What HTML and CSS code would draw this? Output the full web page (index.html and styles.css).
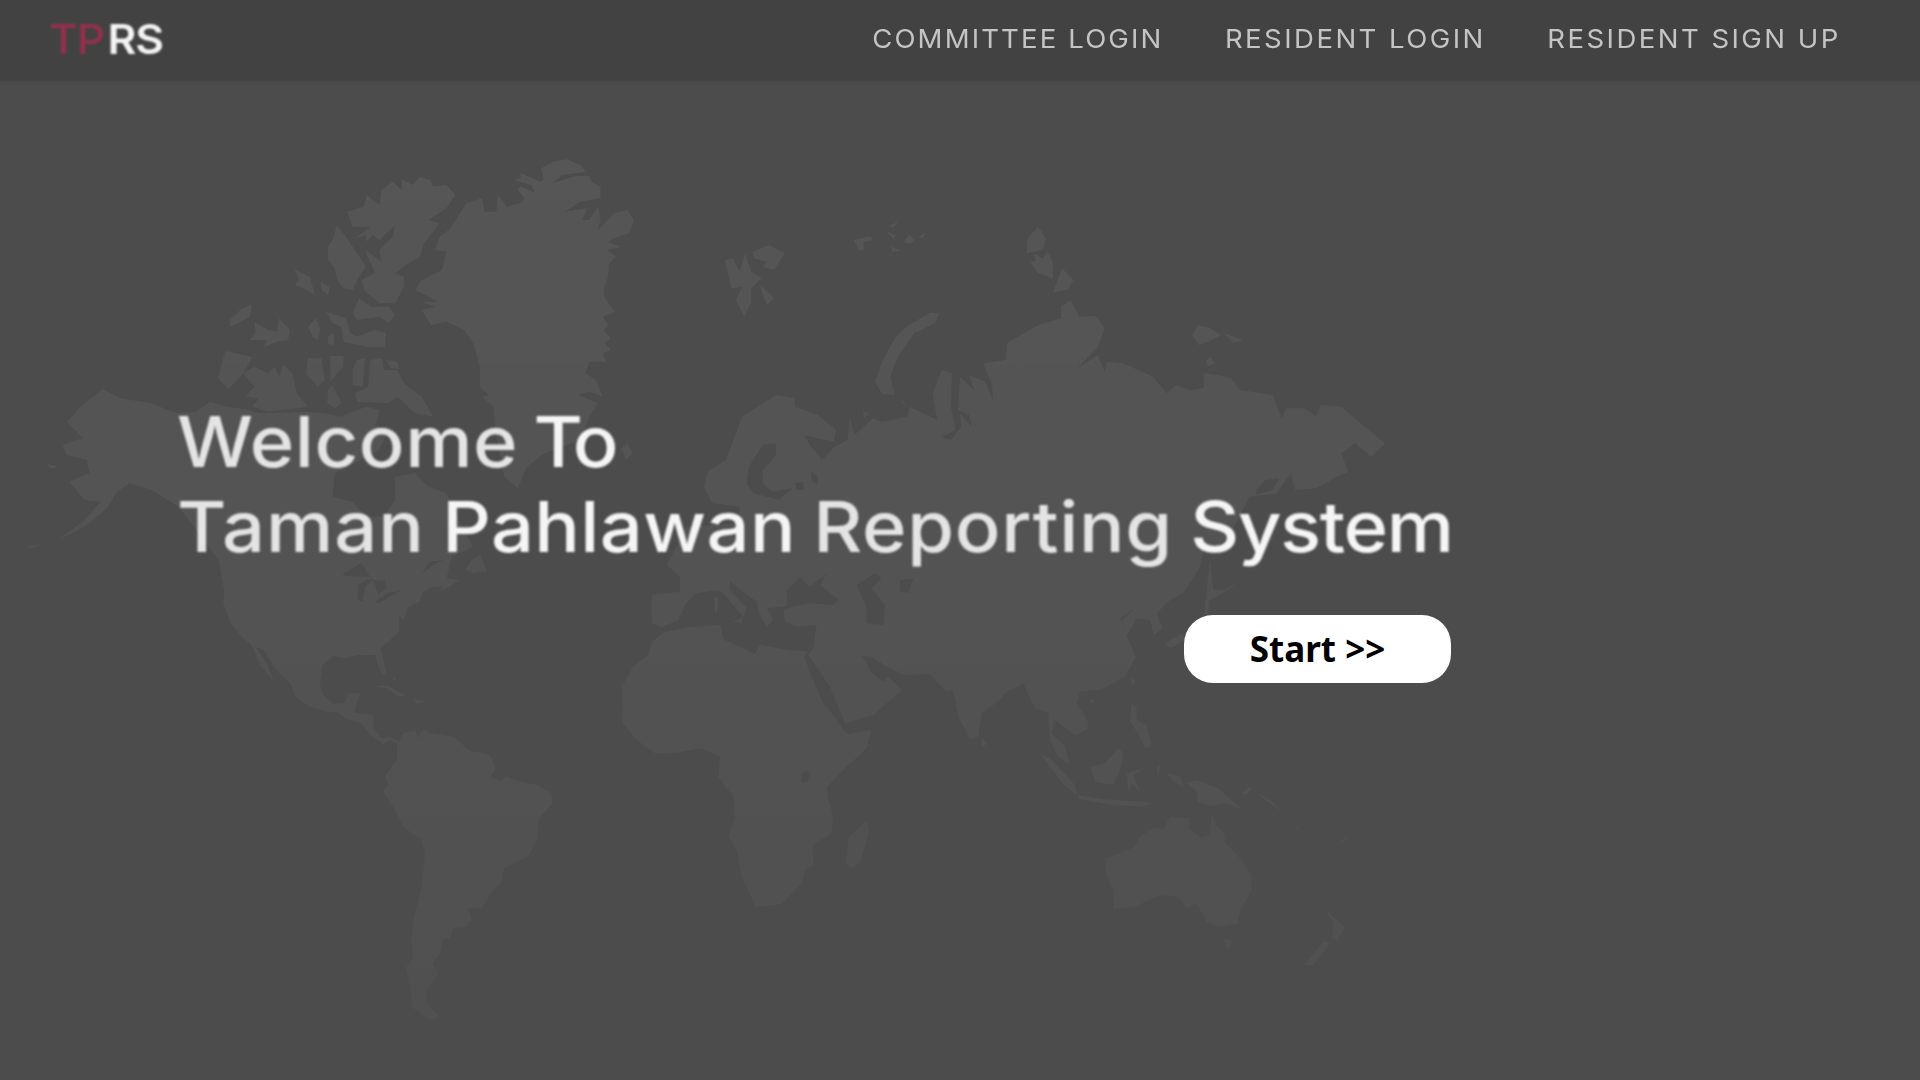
FILE: index.html
```html
<!DOCTYPE html>
<html lang="en">
<head>
<meta charset="utf-8">
<title>TPRS</title>
<link rel="stylesheet" href="styles.css">
</head>
<body>
<svg class="map" viewBox="0 0 1920 1080" aria-hidden="true">
  <defs>
    <linearGradient id="shade" x1="0" y1="0" x2="0" y2="1">
      <stop offset="0" stop-color="#575757"/>
      <stop offset=".45" stop-color="#545454"/>
      <stop offset="1" stop-color="#505050"/>
    </linearGradient>
    <mask id="land" maskUnits="userSpaceOnUse" x="0" y="0" width="1920" height="1080">
      <!-- Arctic, Greenland and the north of America -->
      <g transform="matrix(.4464 0 0 .3333 0 140)" fill="#fff">
        <path d="M1030 220L1045 190 1080 175 1085 215 1112 215 1115 165 1135 200 1165 190 1175 175 1160 150 1165 138 1198 158 1190 135 1150 120 1168 115 1165 98 1210 125 1218 118 1212 85 1240 65 1270 58 1300 75 1312 95 1260 105 1240 128 1290 108 1320 108 1325 125 1345 140 1345 175 1300 185 1265 215 1315 205 1305 240 1320 240 1340 200 1345 235 1340 270 1375 220 1405 210 1420 240 1410 280 1385 290 1360 305 1390 320 1360 330 1380 350 1365 370 1362 410 1352 450 1355 475 1378 515 1350 530 1362 555 1352 570 1368 595 1355 610 1368 630 1350 640 1358 665 1320 665 1312 700 1335 720 1350 770 1320 755 1295 765 1340 790 1320 830 1300 900 1220 940 1180 980 1160 1045 1130 1010 1110 880 1105 800 1080 770 1095 765 1075 740 1075 680 1060 610 1040 570 1000 545 965 555 945 510 975 500 945 485 980 485 930 450 945 420 990 390 1000 335 975 330 985 290 1010 265Z"/>
        <path d="M1020 165L1000 205 960 240 985 250 950 310 940 350 915 370 885 400 905 410 905 440 885 490 850 490 815 450 810 420 840 400 818 330 855 365 850 330 880 290 885 255 850 300 835 285 820 305 820 285 795 295 830 262 790 260 778 215 815 200 822 165 850 195 855 150 880 125 900 150 900 118 925 135 940 110 965 120 970 140 1000 135Z"/>
        <path d="M755 255L780 300 800 340 820 380 800 420 790 450 770 445 755 420 750 385 735 360 735 320 745 300Z"/>
        <path d="M660 388L695 412 705 465 680 445 660 435 670 420ZM718 425L738 440 735 465 720 450ZM565 492L560 530 515 562 515 540 540 508ZM570 545L600 570 620 575 625 535 650 570 645 600 620 605 590 622 600 600 560 600 572 575ZM690 560L708 535 718 570 712 600 700 590ZM730 515L775 535 785 580 800 590 840 570 865 580 862 622 820 620 770 605 765 560 745 550ZM735 590L748 580 748 615 735 612ZM790 520L805 475 830 500 870 500 885 525 870 548 850 530 800 540ZM505 632L565 652 545 700 512 748 488 715ZM545 700L570 680 600 700 615 680 625 710 635 675 655 700 665 760 690 800 600 815 565 800 580 775 550 770 570 740ZM690 655L720 655 728 720 712 740 685 700ZM740 648L770 648 768 680 740 725ZM735 750L745 735 765 790 750 805 733 790ZM800 660L818 655 812 740 790 735 790 690ZM830 660L855 655 860 690 890 690 905 730 945 770 970 830 930 820 890 770 870 790 800 785 795 760 825 740ZM865 660L890 665 895 688 875 685Z"/>
        <path d="M230 748L270 775 340 790 375 810 400 820 440 815 470 785 510 800 560 810 580 820 690 815 730 820 760 830 820 800 850 810 840 860 870 870 850 930 750 1000 745 1070 790 1085 820 1130 860 1130 885 1080 885 1010 930 1000 960 1040 1000 1060 1030 1150 1060 1220 1000 1260 1000 1320 990 1340 500 1340 490 1260 440 1170 400 1100 340 1050 290 1030 262 1055 240 1105 190 1160 130 1200 190 1140 225 1085 190 1080 155 1025 200 1000 195 960 150 945 140 915 185 895 150 845 180 800Z"/>
        <path d="M105 972L130 980 115 986ZM60 1218L95 1214 70 1224ZM1045 1280L1065 1250 1090 1290 1060 1300ZM1392 925L1405 910 1418 940 1402 960Z"/>
      </g>
      <!-- United States down to Cape Horn -->
      <g transform="matrix(.3333 0 0 .3333 200 560)" fill="#fff">
        <path d="M60 -30L75 50 70 130 90 185 125 230 155 255 180 315 220 362 205 318 168 262 190 268 225 325 275 375 285 412 330 440 380 455 410 455 440 478 485 490 510 525 550 552 570 540 592 552 590 600 555 650 565 670 550 695 580 740 610 800 665 840 675 880 665 980 640 1080 633 1140 640 1190 618 1225 630 1280 640 1345 690 1380 718 1370 680 1330 680 1290 715 1240 698 1210 720 1180 728 1138 750 1135 760 1105 800 1100 815 1075 802 1045 845 1045 870 1005 905 965 912 925 985 888 1010 840 1018 775 1058 730 1055 700 1010 675 950 662 920 648 900 662 872 650 888 625 870 585 810 572 760 530 690 520 670 508 655 535 645 510 610 520 598 545 570 530 545 535 520 505 520 465 462 458 480 398 445 402 435 428 400 432 370 405 360 370 368 315 400 288 440 294 470 285 525 285 545 345 558 340 543 265 598 215 598 165 610 180 625 140 660 122 668 95 735 65 720 95 780 60 740 55 760 -30Z"/>
        <path d="M515 380L560 376 620 408 590 408 560 384ZM640 418L682 424 650 432ZM578 350L590 358 582 362ZM795 30L815 0 840 -15 862 35 830 35Z"/>
        <path fill="#000" d="M425 45L485 8 510 50 470 50ZM475 75L500 60 520 58 495 80 488 125 472 120ZM520 60L555 62 560 85 535 102ZM525 125L560 100 605 90 570 110 535 130ZM665 40L690 5 730 0 700 15Z"/>
      </g>
      <!-- Africa, southern Europe and the Middle East -->
      <g transform="matrix(.3333 0 0 .3333 600 540)" fill="#fff">
        <path d="M190 278L260 262 362 255 370 298 420 322 465 342 480 314 560 330 625 335 612 352 665 480 735 575 745 582 815 570 800 625 735 685 682 740 682 770 700 830 695 880 638 915 640 975 615 990 605 1030 545 1092 468 1102 425 1010 410 930 385 890 405 830 400 770 355 710 360 650 300 625 230 638 165 640 110 600 68 550 65 440 100 380 145 345 155 305ZM800 842L808 870 780 970 755 985 737 965 748 890ZM1145 590L1160 612 1145 622Z"/>
        <path d="M200 75L240 110 240 155 155 165 155 250 185 262 235 240 255 195 285 160 340 152 365 155 400 195 430 230 400 245 425 248 440 205 390 150 390 122 435 160 470 185 475 215 500 260 520 240 500 205 560 198 560 150 600 110 630 140 680 100 660 135 715 178 700 195 625 190 550 208 555 245 590 260 650 255 640 325 625 345 690 440 735 550 820 525 905 450 865 410 850 425 815 400 785 345 810 350 870 385 910 405 990 402 1040 455 1060 450 1075 530 1110 598 1135 590 1145 520 1200 480 1260 400 1400 300 1400 0 600 -60 260 -40ZM343 170L355 172 352 215 345 220Z"/>
        <path fill="#000" d="M770 135L825 100 845 115 815 145 855 195 850 255 800 250 800 205ZM900 120L940 115 925 158 900 155ZM605 705L620 690 632 705 620 728 605 725Z"/>
      </g>
      <!-- Scandinavia and Siberia -->
      <g transform="matrix(.4592 0 0 .3333 680 200)" fill="#fff">
        <path d="M210 585L250 595 250 620 300 645 340 690 335 725 270 705 285 740 310 780 335 740 365 720 370 655 380 705 420 655 440 665 495 650 500 620 560 660 550 580 570 510 592 520 590 620 600 690 570 710 590 720 612 680 610 640 635 680 630 645 605 630 610 530 640 570 630 525 665 545 682 605 680 555 660 490 710 480 712 430 780 375 830 355 830 320 850 300 870 350 905 348 925 385 910 440 865 505 910 465 925 515 930 485 965 490 1030 530 1060 580 1080 555 1110 570 1140 565 1140 520 1170 525 1200 535 1220 570 1290 585 1310 655 1320 625 1360 625 1385 650 1395 615 1440 620 1500 690 1535 730 1505 770 1470 730 1440 760 1455 815 1430 830 1385 865 1340 870 1330 820 1300 880 1240 890 1200 1000 1170 1040 30 1040 60 1020 130 960 130 920 70 910 52 860 60 815 100 780 135 650Z"/>
        <path d="M378 120L415 108 420 120 400 125 400 150 390 150ZM450 95L470 105 465 118ZM488 120L500 105 510 120 505 130 490 130ZM520 110L535 98 528 115ZM455 78L475 65 465 82ZM460 140L482 152 462 155ZM97 180L115 175 130 215 142 160 155 215 178 235 155 265 155 305 140 350 122 300 135 260 112 265ZM158 155L195 135 228 160 205 210 180 200 190 185 160 175ZM175 255L205 295 190 315 178 280ZM780 80L797 115 790 150 755 160 757 115ZM770 160L790 175 800 155 812 185 812 235 780 220 762 185 775 182ZM832 205L857 240 845 268 812 278ZM545 338L565 340 555 370 510 400 475 470 458 530 468 585 440 582 425 545 440 485 470 410 495 378ZM475 590L495 618 485 610ZM1128 375L1155 385 1178 405 1150 425 1130 435 1115 405ZM1185 400L1225 420 1205 430ZM1145 485L1155 470 1165 490 1150 498ZM398 635L412 638 402 655Z"/>
        <path fill="#000" d="M180 735L208 730 210 765 180 810 180 850 200 875 245 865 215 900 160 880 145 850 150 800ZM250 850L268 845 270 870 255 870ZM285 815L300 830 300 855 288 845ZM1255 870L1275 840 1305 835 1290 870 1255 885Z"/>
      </g>
      <!-- East Asia and Oceania -->
      <g transform="matrix(.3333 0 0 .3333 980 540)" fill="#fff">
        <path d="M0 -60H690L660 80 610 160 570 180 530 220 548 265 522 285 510 240 470 235 440 290 425 240 465 205 420 235 445 300 468 350 435 410 365 448 300 455 290 490 325 545 320 570 285 585 225 540 215 580 255 620 268 675 235 650 210 600 205 520 165 505 130 430 90 450 0 510ZM325 480L345 478 335 490ZM452 415L465 420 455 440Z"/>
        <path d="M180 640L215 660 285 735 290 765 250 735ZM290 765L370 778 520 788 490 800 400 796 300 778ZM330 680L375 670 415 625 430 640 420 690 400 735 345 725ZM440 700L500 682 460 705 480 755 455 730 445 755ZM455 490L470 500 470 540 500 555 515 620 495 625 480 590 450 545ZM530 680L540 675 535 710ZM560 700L600 710 610 740 580 725ZM620 730L650 720 715 745 750 775 785 810 740 790 690 798 655 785 650 755ZM785 760L810 740 790 728 815 745 800 762ZM830 758L870 780 915 818 870 790ZM925 840L980 885 950 865ZM1082 905L1105 885 1095 905ZM690 60L700 150 735 150 790 115 720 165 690 180 685 220 672 225 680 150ZM555 310L605 280 620 300 570 325Z"/>
        <path d="M695 825L710 860 730 875 738 910 785 960 815 1005 815 1050 780 1115 772 1150 715 1162 680 1145 650 1090 620 1105 595 1070 540 1065 470 1098 400 1108 400 1055 375 990 380 955 465 920 475 895 520 862 550 868 570 830 630 835 625 865 665 892 688 885ZM728 1195L758 1200 745 1230ZM1035 1108L1060 1130 1095 1160 1072 1200 1055 1195 1060 1150ZM1030 1205L1050 1210 1000 1275 972 1275Z"/>
      </g>
    </mask>
  </defs>
  <rect class="land" width="1920" height="1080" fill="url(#shade)" mask="url(#land)"/>
</svg>
<header class="bar">
  <a class="logo"><span class="logo-red">TP</span><span class="logo-white">RS</span></a>
  <nav class="links">
    <a class="link">COMMITTEE LOGIN</a>
    <a class="link loose">RESIDENT LOGIN</a>
    <a class="link loose">RESIDENT SIGN UP</a>
  </nav>
</header>
<main class="hero">
  <h1 class="title">
    <span class="line first"><span class="dim welcome">Welcome</span> <span class="to">To</span></span>
    <span class="line second"><span class="dim taman">Taman</span> <span class="pahlawan">Pahlawan</span> <span class="dim reporting">Reporting</span> <span class="system">System</span></span>
  </h1>
  <button class="start">Start &gt;&gt;</button>
</main>
</body>
</html>
```
FILE: styles.css
```css
* { box-sizing: border-box; }
html, body { height: 100%; }
body {
  margin: 0;
  background: #4c4c4c;
  font-family: Inter, "Liberation Sans", sans-serif;
  overflow: hidden;
}
.map {
  position: absolute;
  inset: 0;
  width: 1920px;
  height: 1080px;
  z-index: -1;
}
.land { filter: blur(.8px); }
.bar {
  display: flex;
  justify-content: space-between;
  align-items: center;
  height: 81px;
  padding: 0 79px 4px 49px;
  background: #424242;
  box-shadow: 0 0 3px #444;
}
.logo {
  font-size: 41px;
  font-weight: 600;
  letter-spacing: -1px;
  transform: scaleX(1.08);
  transform-origin: left;
  filter: blur(.8px);
}
.logo-red { margin-right: 3px; color: #94304b; font-weight: 500; }
.logo-white { color: #f4f4f4; }
.links {
  display: flex;
  gap: 58px;
  transform: scaleX(1.06);
  transform-origin: right;
}
.link {
  color: #c4c4c4;
  font-size: 26px;
  letter-spacing: 2px;
  white-space: nowrap;
  filter: blur(.7px);
}
.loose { letter-spacing: 2.3px; }
.hero {
  display: flex;
  flex-direction: column;
  width: 1451px;
  padding: 318px 0 0 177px;
}
.title {
  margin: 0;
  color: #f5f5f5;
  font-size: 70px;
  font-weight: 500;
  line-height: 85px;
  white-space: nowrap;
  transform: scaleX(1.0833);
  transform-origin: left;
  filter: blur(.9px);
}
.line { display: block; word-spacing: -2.7px; }
.first { word-spacing: -4.5px; }
.dim { color: #e4e4e4; }
.welcome { letter-spacing: .5px; }
.to { letter-spacing: -4px; }
.taman { letter-spacing: .9px; }
.pahlawan { letter-spacing: .35px; }
.reporting { letter-spacing: .65px; }
.system { letter-spacing: -1.2px; }
.start {
  align-self: flex-end;
  width: 267px;
  height: 68px;
  margin-top: 46px;
  padding: 0 0 2px;
  border: 0;
  border-radius: 29px;
  background: #fff;
  color: #000;
  font: 700 35px "Noto Sans", "Open Sans", sans-serif;
}
```
